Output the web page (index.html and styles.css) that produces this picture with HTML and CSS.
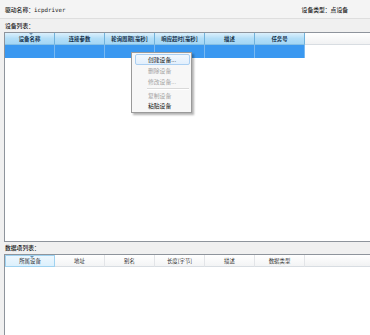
FILE: index.html
```html
<!DOCTYPE html>
<html>
<head>
<meta charset="utf-8">
<link rel="stylesheet" href="styles.css">
</head>
<body>
<div class="page">
  <div class="topbar">
    <span>驱动名称：<span class="mono">icpdriver</span></span>
    <span>设备类型：点设备</span>
  </div>
  <div class="label">设备列表：</div>
  <div class="grid grid-dev">
    <div class="head blue">
      <div class="hc">设备名称<i class="sort"></i></div>
      <div class="hc">连接参数</div>
      <div class="hc">轮询周期[毫秒]</div>
      <div class="hc">响应超时[毫秒]</div>
      <div class="hc">描述</div>
      <div class="hc">任务号</div>
      <div class="hfill"></div>
    </div>
    <div class="row sel">
      <div class="c"></div><div class="c"></div><div class="c"></div><div class="c"></div><div class="c"></div><div class="c"></div>
    </div>
  </div>
  <div class="label label2">数据项列表：</div>
  <div class="grid grid-data">
    <div class="head plain">
      <div class="hc hot">所属设备<i class="sort"></i></div>
      <div class="hc">地址</div>
      <div class="hc">别名</div>
      <div class="hc">长度[字节]</div>
      <div class="hc">描述</div>
      <div class="hc">数据类型</div>
      <div class="hfill"></div>
    </div>
  </div>
  <div class="menu">
    <div class="mi hover">创建设备...</div>
    <div class="mi dis">删除设备</div>
    <div class="mi dis">修改设备...</div>
    <div class="msep"></div>
    <div class="mi short dis">复制设备</div>
    <div class="mi short">粘贴设备</div>
  </div>
</div>
</body>
</html>
```

FILE: styles.css
```css
html, body {
  margin: 0;
  padding: 0;
  overflow: hidden;
}
body {
  background: #f0f0f0;
  font-family: "Noto Sans CJK SC", "DejaVu Sans", sans-serif;
  font-size: 5.8px;
  color: #1a1a1a;
}
.page {
  position: relative;
  width: 370px;
  height: 335px;
  overflow: hidden;
}
.topbar {
  height: 18px;
  border-bottom: 1px solid #dedede;
  background: #f4f4f4;
  display: flex;
  justify-content: space-between;
  align-items: center;
  padding: 0 22px 0 5px;
  font-weight: 500;
}
.mono {
  font-family: "DejaVu Sans Mono", monospace;
  font-size: 5.8px;
}
.label {
  height: 13px;
  line-height: 13px;
  padding-left: 5px;
  font-weight: 500;
}
.label2 {
  height: 12px;
  line-height: 12px;
}
.grid {
  margin-left: 4px;
  width: 380px;
  background: #fff;
  border: 1px solid #8e949c;
  border-right: none;
}
.grid-dev {
  height: 208px;
}
.grid-data {
  height: 100px;
}
.head {
  display: flex;
  height: 12px;
}
.hc {
  position: relative;
  width: 50px;
  box-sizing: border-box;
  text-align: center;
  line-height: 12px;
  white-space: nowrap;
  font-size: 5.4px;
}
.blue .hc {
  background: linear-gradient(#dcf0fc, #b3def7 50%, #a3d6f5);
  border-right: 1px solid #6fb2dc;
  border-bottom: 1px solid #86c0e4;
  color: #14304a;
  font-weight: bold;
}
.hfill {
  flex: 1;
  background: linear-gradient(#ffffff, #f1f2f3);
  border-bottom: 1px solid #d8dde2;
}
.plain .hc {
  background: linear-gradient(#ffffff, #f3f4f5);
  border-right: 1px solid #e3e5e8;
  border-bottom: 1px solid #d8dde2;
  color: #333;
}
.plain .hc.hot {
  background: linear-gradient(#edf7fe, #dcf0fc);
  border: 1px solid #9fd2f0;
  line-height: 10px;
}
.sort {
  position: absolute;
  left: 24px;
  top: 0;
  width: 0;
  height: 0;
  border-left: 2px solid transparent;
  border-right: 2px solid transparent;
  border-top: 2px solid #6a8fb0;
}
.row {
  display: flex;
  height: 13px;
}
.sel .c {
  width: 50px;
  box-sizing: border-box;
  background: #3a98f0;
  border-right: 1px solid #78b9f2;
}
.menu {
  position: absolute;
  left: 131px;
  top: 52px;
  width: 59px;
  padding: 1px 0 1px;
  background: #f7f7f7;
  border: 1px solid #9a9a9a;
  box-shadow: 2px 2px 2px rgba(0, 0, 0, 0.3);
}
.mi {
  height: 11px;
  line-height: 11px;
  padding-left: 16px;
  color: #111;
  white-space: nowrap;
}
.mi.short {
  height: 10px;
  line-height: 10px;
}
.mi.hover {
  margin: 0 1px 0 3px;
  padding-left: 12px;
  height: 9px;
  border: 1px solid #aacff2;
  border-radius: 2px;
  background: linear-gradient(#f2f8fe, #e2effc);
  line-height: 9px;
}
.mi.dis {
  color: #a3a3a3;
}
.msep {
  height: 1px;
  margin: 1px 2px 1px 15px;
  background: #d9d9d9;
  border-bottom: 1px solid #fff;
}
```
